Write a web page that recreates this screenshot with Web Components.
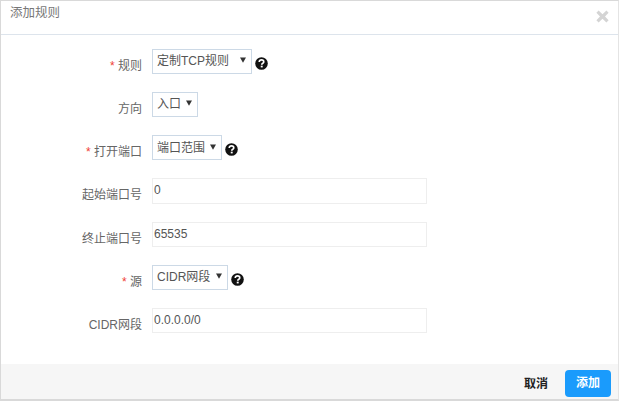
<!DOCTYPE html>
<html lang="zh">
<head>
<meta charset="utf-8">
<title>添加规则</title>
<style>
  html, body { margin: 0; height: 100%; background: #fff; }
  body { font-family: "Liberation Sans", "Noto Sans CJK SC", sans-serif; font-size: 12px; color: #555; }
</style>
</head>
<body>
<rule-dialog heading="添加规则">
  <form-row label="规则" required>
    <select-box width="100">定制TCP规则</select-box>
    <help-icon></help-icon>
  </form-row>
  <form-row label="方向">
    <select-box width="46">入口</select-box>
  </form-row>
  <form-row label="打开端口" required>
    <select-box width="70" drop="1">端口范围</select-box>
    <help-icon></help-icon>
  </form-row>
  <form-row label="起始端口号"><text-box tall>0</text-box></form-row>
  <form-row label="终止端口号"><text-box>65535</text-box></form-row>
  <form-row label="源" required>
    <select-box width="76">CIDR网段</select-box>
    <help-icon></help-icon>
  </form-row>
  <form-row label="CIDR网段"><text-box>0.0.0.0/0</text-box></form-row>
</rule-dialog>

<script>
"use strict";

class RuleDialog extends HTMLElement {
  constructor() {
    super();
    const shadow = this.attachShadow({mode: 'open'});
    shadow.innerHTML = `
      <style>
        :host {
          display: flex;
          flex-direction: column;
          box-sizing: border-box;
          width: 619px;
          height: 401px;
          border: 1px solid #d9d9d9;
          border-right-color: #e4e4e4;
          border-bottom-width: 2px;
          background: #fff;
        }
        header {
          display: flex;
          justify-content: space-between;
          height: 34px;
          flex: none;
          box-sizing: border-box;
          border-bottom: 1px solid #dde4ec;
          padding: 4px 9px 0 9px;
          font-size: 12.5px;
          line-height: 17px;
          color: #777;
        }
        header svg { margin-top: 5px; }
        main {
          flex: 1;
          display: flex;
          flex-direction: column;
          gap: 18px;
          padding-top: 14px;
        }
        footer {
          flex: none;
          height: 35px;
          display: flex;
          align-items: center;
          justify-content: flex-end;
          gap: 17px;
          padding-right: 7px;
          background: #f6f6f6;
        }
        .cancel { font-weight: bold; color: #222; margin-top: 2px; }
        .ok {
          width: 46px;
          height: 27px;
          margin-top: 4px;
          border-radius: 4px;
          background: #1a9bfc;
          color: #fff;
          font-weight: bold;
          text-align: center;
          line-height: 27px;
        }
      </style>
      <header>
        <span class="title"></span>
        <svg width="13" height="13" viewBox="0 0 13 13" aria-hidden="true">
          <path d="M2.6 .6 6.5 4.2 10.4 .6 12.6 2.8 9 6.5 12.6 10.2 10.4 12.4 6.5 8.8 2.6 12.4 .4 10.2 4 6.5 .4 2.8Z" fill="#d4d4d4"/>
        </svg>
      </header>
      <main><slot></slot></main>
      <footer>
        <span class="cancel">取消</span>
        <span class="ok">添加</span>
      </footer>
    `;
    shadow.querySelector('.title').textContent = this.getAttribute('heading');
  }
}

class FormRow extends HTMLElement {
  constructor() {
    super();
    const shadow = this.attachShadow({mode: 'open'});
    shadow.innerHTML = `
      <style>
        :host {
          display: flex;
          align-items: flex-start;
          gap: 10px;
          min-height: 25px;
        }
        .label {
          width: 141px;
          flex: none;
          box-sizing: border-box;
          text-align: right;
          padding-top: 9px;
          line-height: 16px;
          color: #666;
        }
        .star { color: #f04134; }
        .body { display: flex; align-items: center; gap: 4px; }
      </style>
      <span class="label"></span>
      <div class="body"><slot></slot></div>
    `;
    const label = shadow.querySelector('.label');
    if (this.hasAttribute('required')) {
      const star = document.createElement('span');
      star.className = 'star';
      star.textContent = '* ';
      label.appendChild(star);
    }
    label.appendChild(document.createTextNode(this.getAttribute('label')));
  }
}

class SelectBox extends HTMLElement {
  constructor() {
    super();
    const shadow = this.attachShadow({mode: 'open'});
    shadow.innerHTML = `
      <style>
        :host {
          display: flex;
          box-sizing: border-box;
          height: 25px;
          border: 1px solid #ccd9e6;
          padding: 0 0 0 4px;
          line-height: 23px;
          color: #555;
          position: relative;
        }
        svg { position: absolute; top: 7px; right: 5px; }
      </style>
      <slot></slot>
      <svg width="6" height="6" viewBox="0 0 6 6" aria-hidden="true"><path d="M0 .4H6L3 5.8Z" fill="#333"/></svg>
    `;
    this.style.width = this.getAttribute('width') + 'px';
    if (this.hasAttribute('drop')) {
      this.style.lineHeight = '25px';
      shadow.querySelector('svg').style.top = '8px';
    }
  }
}

class TextBox extends HTMLElement {
  constructor() {
    super();
    const shadow = this.attachShadow({mode: 'open'});
    shadow.innerHTML = `
      <style>
        :host {
          display: block;
          box-sizing: border-box;
          width: 275px;
          height: 25px;
          border: 1px solid #eeeeee;
          padding-left: 1px;
          line-height: 23px;
          color: #555;
        }
        :host([tall]) { height: 26px; }
      </style>
      <slot></slot>
    `;
  }
}

class HelpIcon extends HTMLElement {
  constructor() {
    super();
    const shadow = this.attachShadow({mode: 'open'});
    shadow.innerHTML = `
      <style>
        :host { display: inline-flex; width: 13px; height: 13px; margin-top: 3px; margin-left: -1px; }
      </style>
      <svg width="13" height="13" viewBox="0 0 12 12" aria-hidden="true">
        <circle cx="6" cy="6" r="5.8" fill="#111"/>
        <path d="M3.9 4.6C4 3.4 4.9 2.7 6 2.7 7.2 2.7 8.1 3.4 8.1 4.5 8.1 5.9 6.2 5.7 6.2 7.2" fill="none" stroke="#fff" stroke-width="1.5"/>
        <rect x="5.3" y="8" width="1.8" height="1.6" fill="#fff"/>
      </svg>
    `;
  }
}

customElements.define('rule-dialog', RuleDialog);
customElements.define('form-row', FormRow);
customElements.define('select-box', SelectBox);
customElements.define('text-box', TextBox);
customElements.define('help-icon', HelpIcon);
</script>
</body>
</html>
